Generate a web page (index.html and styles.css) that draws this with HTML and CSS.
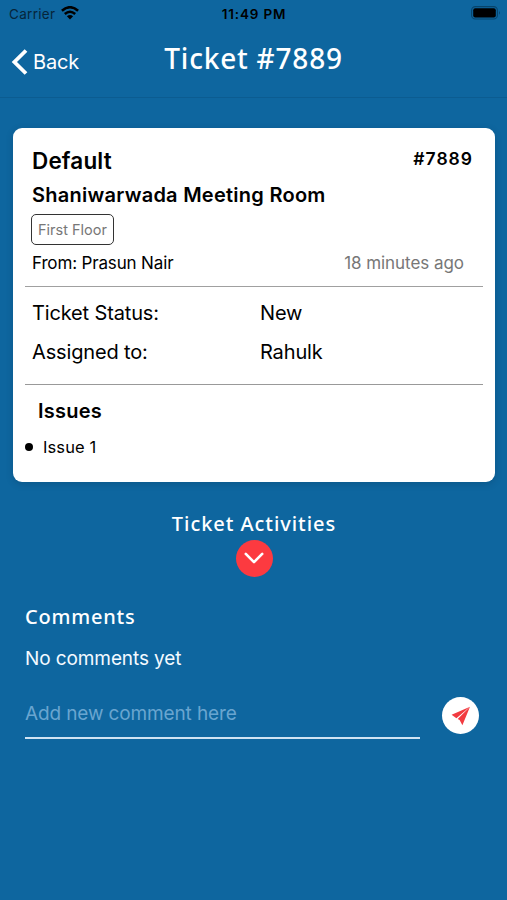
FILE: index.html
```html
<!DOCTYPE html>
<html lang="en">
<head>
<meta charset="utf-8">
<title>Ticket #7889</title>
<link rel="stylesheet" href="styles.css">
</head>
<body>
<div class="status-bar">
  <div class="carrier"><span>Carrier</span>
    <svg width="18" height="14" viewBox="0 0 18 14" fill="none" stroke="#000" stroke-width="2.5"><path d="M.9 4.8Q9-2.4 17.1 4.8M3.8 8Q9 3.4 14.2 8"/><path d="M9 13.4 5.9 10.2Q9 7.6 12.1 10.2Z" fill="#000" stroke="none"/></svg>
  </div>
  <span class="clock">11:49 PM</span>
  <svg class="battery" width="30" height="14" viewBox="0 0 30 14"><rect x=".6" y=".6" width="25.8" height="12.4" rx="3.8" fill="none" stroke="#07446b" stroke-width="1.1"/><rect x="2.2" y="2.2" width="22.6" height="9.2" rx="2" fill="#000"/><path d="M28 4.8q1.8 2 0 4z" fill="#07446b"/></svg>
</div>
<header class="nav">
  <div class="back">
    <svg width="17" height="26" viewBox="0 0 17 26" fill="none" stroke="#fff" stroke-width="3.8"><path d="M15 1.5 3.4 13 15 24.5"/></svg>
    <span>Back</span>
  </div>
  <h1>Ticket #7889</h1>
</header>
<main>
  <section class="card">
    <div class="row type"><h2>Default</h2><span class="number">#7889</span></div>
    <h3 class="room">Shaniwarwada Meeting Room</h3>
    <span class="floor"><span>First Floor</span></span>
    <div class="row meta"><span class="from">From: Prasun Nair</span><span class="ago">18 minutes ago</span></div>
    <dl class="details">
      <dt class="st">Ticket Status:</dt><dd>New</dd>
      <dt class="as">Assigned to:</dt><dd class="who">Rahulk</dd>
    </dl>
    <h3 class="issues-title">Issues</h3>
    <ul class="issues"><li><span>Issue 1</span></li></ul>
  </section>
  <section class="activities">
    <h2>Ticket Activities</h2>
    <div class="toggle"><svg width="20" height="13" viewBox="0 0 20 13" fill="none" stroke="#fff" stroke-width="2.6" stroke-linecap="round" stroke-linejoin="round"><path d="M1.8 1.9 10 10.2 18.2 1.9"/></svg></div>
  </section>
  <section class="comments">
    <h2>Comments</h2>
    <p>No comments yet</p>
    <div class="composer">
      <div class="field"><span>Add new comment here</span></div>
      <div class="send"><svg width="20" height="20" viewBox="0 0 20 20" fill="#f23b40"><path d="M19 .8.6 8.8 5.4 12.2Z"/><path d="M19 .8 6.7 12.9 8.6 13.9 11.4 19.2Z"/></svg></div>
    </div>
  </section>
</main>
</body>
</html>
```
FILE: styles.css
```css
* { box-sizing: border-box; margin: 0; padding: 0; }
body { width: 507px; height: 900px; overflow: hidden; background: #0e669f; font-family: Inter, "Liberation Sans", sans-serif; color: #000; }
h1, .activities h2, .comments h2 { font-family: "Noto Sans", "Open Sans", sans-serif; font-weight: 500; color: #fff; }
span, h1, h2, h3, p, dt, dd { white-space: nowrap; }

.status-bar { display: grid; grid-template-columns: 1fr auto 1fr; align-items: center; height: 28px; padding: 0 6px 0 9px; font-size: 13px; }
.carrier { display: flex; align-items: center; gap: 6px; color: #06253a; font-size: 13.5px; letter-spacing: .3px; }
.carrier svg { margin-top: -2px; }
.clock { margin-right: 2px; font-size: 13.5px; font-weight: 600; letter-spacing: .85px; }
.battery { justify-self: end; margin-top: -2px; }

.nav { display: grid; grid-template-columns: 1fr auto 1fr; height: 70px; border-bottom: 1px solid #0b5c91; }
.back { display: flex; align-items: center; gap: 5px; height: 68px; padding-left: 11px; color: #fff; font-size: 20px; letter-spacing: -.2px; }
h1 { height: 62px; line-height: 61px; font-size: 28px; letter-spacing: .8px; }

.card { width: 482px; height: 354px; margin: 30px 0 0 13px; padding: 16px 12px 0; background: #fff; border-radius: 9px; box-shadow: 0 2px 7px rgba(0, 35, 65, .22); }
.row { display: flex; justify-content: space-between; }
.type { height: 34px; padding: 0 11px 0 7px; }
.type h2 { font-size: 22.5px; font-weight: 600; line-height: 34px; letter-spacing: .15px; }
.number { font-size: 17.5px; font-weight: 600; line-height: 29px; letter-spacing: 1px; margin-right: -1px; }
.room { height: 36px; padding-left: 7px; font-size: 20px; font-weight: 600; line-height: 35px; letter-spacing: .26px; }
.floor { display: flex; align-items: center; justify-content: center; width: 83px; height: 31px; margin-left: 6px; border: 1.5px solid #333; border-radius: 5px; color: #777; font-size: 14.5px; }
.meta { height: 42px; padding: 0 19px 0 7px; border-bottom: 1px solid #a0a0a0; font-size: 17px; line-height: 37px; letter-spacing: -.15px; }
.ago { color: #777; letter-spacing: -.05px; }
.details { display: grid; grid-template-columns: 228px 1fr; grid-template-rows: 39px 39px; height: 98px; padding: 7px 0 0 7px; border-bottom: 1px solid #999; font-size: 20px; line-height: 39px; letter-spacing: -.15px; }
.issues-title { height: 45px; padding-left: 13px; font-size: 20px; font-weight: 600; line-height: 52px; letter-spacing: .25px; }
.issues li { display: flex; align-items: center; gap: 10px; height: 34px; font-size: 16.5px; letter-spacing: .1px; }
.issues li::before { content: ""; width: 8px; height: 8px; border-radius: 50%; background: #000; }

.activities { display: flex; flex-direction: column; align-items: center; margin-top: 27px; padding-left: 1px; }
.activities h2 { height: 31px; line-height: 30px; font-size: 20px; letter-spacing: .95px; }
.toggle, .send { display: flex; align-items: center; justify-content: center; width: 37px; height: 37px; border-radius: 50%; }
.toggle { background: #fc3a40; }

.comments { padding: 24px 28px 0 25px; }
.comments h2 { height: 32px; line-height: 32px; font-size: 20px; letter-spacing: .8px; }
.comments p { height: 50px; line-height: 51px; color: #f4faff; font-size: 19px; letter-spacing: -.1px; }
.composer { display: flex; justify-content: space-between; margin-top: 14px; }
.field { width: 395px; height: 42px; border-bottom: 2px solid #cfe3f3; color: #69a5d0; font-size: 19px; line-height: 33px; letter-spacing: -.13px; }
.send { background: #fff; }
```
